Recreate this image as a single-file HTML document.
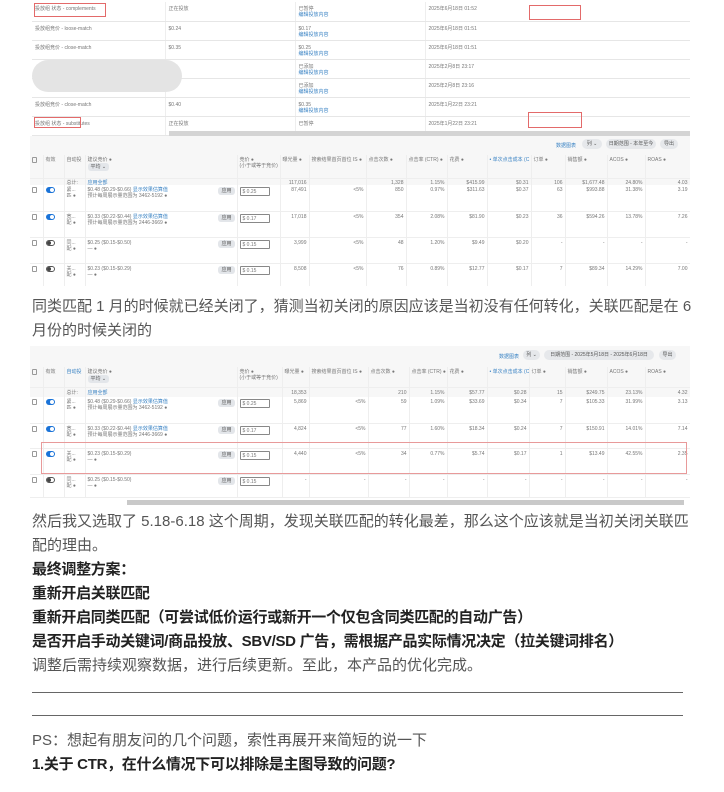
<!DOCTYPE html>
<html><head><meta charset="utf-8"><style>
*{margin:0;padding:0;box-sizing:border-box}
body{width:724px;height:792px;background:#fff;position:relative;overflow:hidden;font-family:"Liberation Sans","Noto Sans CJK SC",sans-serif}
.abs{position:absolute}
table{border-collapse:collapse;table-layout:fixed;font-size:5px;color:#777;line-height:6px}
td{vertical-align:top;padding:2px 2px;overflow:hidden;white-space:nowrap}
.b{color:#3a83c4}
.t1 td{border-bottom:1px solid #e6e6e6;height:19px;border-right:1px solid #eee;padding:4px 3px 0}
.t2 td{border-right:1px solid #eee;border-bottom:1px solid #eee}
.r{text-align:right}
.tog{display:inline-block;width:9px;height:6px;border-radius:3px;background:#1a73d8;position:relative}
.tog::after{content:"";position:absolute;right:1px;top:1px;width:4px;height:4px;border-radius:50%;background:#fff}
.tog.off{background:#fff;border:1px solid #555}
.tog.off::after{left:0;right:auto;top:0;background:#444}
.cb{display:inline-block;width:5px;height:6px;border:1px solid #999;border-radius:1px}
.btn{display:inline-block;background:#e3e6ea;border-radius:3px;padding:1px 3px;color:#555}
.inp{display:inline-block;width:30px;height:9px;border:1px solid #888;border-radius:1px;padding:1px 2px;line-height:6px}
.pill{position:absolute;background:#e6e8eb;border-radius:5px;font-size:5px;color:#555;text-align:center;line-height:10px;height:10px}
.txt{position:absolute;left:32px;font-size:15px;line-height:24px;color:#555;white-space:nowrap}
.bold{color:#222;font-weight:bold;letter-spacing:-0.3px}
.hr{position:absolute;left:32px;width:651px;height:1px;background:#666}
</style></head><body>

<!-- screenshot 1 -->
<div class="abs" style="left:32px;top:0;width:658px;height:136px;background:#fff;overflow:hidden">
<table class="t1" style="width:658px;position:absolute;top:2px;left:0">
<colgroup><col style="width:133px"><col style="width:130px"><col style="width:130px"><col style="width:265px"></colgroup>
<tr><td>投放组 状态 - complements</td><td>正在投放</td><td>已暂停<br><span class="b">编辑投放内容</span></td><td>2025年6月18日 01:52</td></tr>
<tr><td>投放组竞价 - loose-match</td><td>$0.24</td><td>$0.17<br><span class="b">编辑投放内容</span></td><td>2025年6月18日 01:51</td></tr>
<tr><td>投放组竞价 - close-match</td><td>$0.35</td><td>$0.25<br><span class="b">编辑投放内容</span></td><td>2025年6月18日 01:51</td></tr>
<tr><td></td><td>-</td><td>已添加<br><span class="b">编辑投放内容</span></td><td>2025年2月8日 23:17</td></tr>
<tr><td></td><td>-</td><td>已添加<br><span class="b">编辑投放内容</span></td><td>2025年2月8日 23:16</td></tr>
<tr><td>投放组竞价 - close-match</td><td>$0.40</td><td>$0.35<br><span class="b">编辑投放内容</span></td><td>2025年1月22日 23:21</td></tr>
<tr><td>投放组 状态 - substitutes</td><td>正在投放</td><td>已暂停</td><td>2025年1月22日 23:21</td></tr>
</table>
<div class="abs" style="left:0;top:60px;width:150px;height:32px;border-radius:16px;background:#e4e4e4"></div>
<div class="abs" style="left:2px;top:3px;width:72px;height:14px;border:1px solid #e36a6a"></div>
<div class="abs" style="left:2px;top:117px;width:47px;height:11px;border:1px solid #e36a6a"></div>
<div class="abs" style="left:497px;top:5px;width:52px;height:15px;border:1px solid #e36a6a"></div>
<div class="abs" style="left:496px;top:112px;width:54px;height:16px;border:1px solid #e36a6a"></div>
<div class="abs" style="left:137px;top:131px;width:521px;height:5px;background:#d4d4d4"></div>
</div>

<!-- screenshot 2 -->
<div class="abs" style="left:30px;top:136px;width:660px;height:150px;background:#f7f7f7;overflow:hidden">
<span class="abs b" style="left:526px;top:6px;font-size:5px">数据图表</span>
<div class="pill" style="left:552px;top:3px;width:20px">列 ⌄</div>
<div class="pill" style="left:576px;top:3px;width:50px">日期范围 - 本年至今</div>
<div class="pill" style="left:630px;top:3px;width:18px">导出</div>
<table class="t2" style="width:660px;position:absolute;top:19px;left:0">
<colgroup><col style="width:13px"><col style="width:21px"><col style="width:21px"><col style="width:152px"><col style="width:43px"><col style="width:29px"><col style="width:57px"><col style="width:40px"><col style="width:41px"><col style="width:40px"><col style="width:44px"><col style="width:34px"><col style="width:42px"><col style="width:38px"><col style="width:45px"></colgroup>
<tr style="height:23px"><td><span class="cb"></span></td><td>有效</td><td>自动投</td><td>建议竞价 ●<br><span class="btn">平均 ⌄</span></td><td>竞价 ●<br>(小于或等于竞价)</td><td>曝光量 ●</td><td>搜索结果首页首位 IS ●</td><td>点击次数 ●</td><td>点击率 (CTR) ●</td><td>花费 ●</td><td class="b">• 单次点击成本 (C</td><td>订单 ●</td><td>销售额 ●</td><td>ACOS ●</td><td>ROAS ●</td></tr>
<tr style="height:8px"><td style="padding:1px 2px"></td><td style="padding:1px 2px"></td><td style="padding:1px 2px">总计:</td><td class="b" style="padding:1px 2px">应用全部</td><td></td><td class="r" style="padding:1px 2px">117,016</td><td></td><td class="r" style="padding:1px 2px">1,328</td><td class="r" style="padding:1px 2px">1.15%</td><td class="r" style="padding:1px 2px">$415.99</td><td class="r" style="padding:1px 2px">$0.31</td><td class="r" style="padding:1px 2px">106</td><td class="r" style="padding:1px 2px">$1,677.48</td><td class="r" style="padding:1px 2px">24.80%</td><td class="r" style="padding:1px 2px">4.03</td></tr>
</table>
<table class="t2" style="width:660px;position:absolute;top:49px;left:0;background:#fff">
<colgroup><col style="width:13px"><col style="width:21px"><col style="width:21px"><col style="width:152px"><col style="width:43px"><col style="width:29px"><col style="width:57px"><col style="width:40px"><col style="width:41px"><col style="width:40px"><col style="width:44px"><col style="width:34px"><col style="width:42px"><col style="width:38px"><col style="width:45px"></colgroup>
<tr style="height:26px"><td><span class="cb"></span></td><td><span class="tog"></span></td><td>紧...<br>匹 ●</td><td>$0.48 ($0.29-$0.66) <span class="b">显示效果估算值</span> <span class="btn" style="float:right">应用</span><br>预计每周展示量范围为 3462-5192 ●</td><td><span class="inp">$ 0.25</span></td><td class="r">87,491</td><td class="r">&lt;5%</td><td class="r">850</td><td class="r">0.97%</td><td class="r">$311.63</td><td class="r">$0.37</td><td class="r">63</td><td class="r">$993.88</td><td class="r">31.38%</td><td class="r">3.19</td></tr>
<tr style="height:26px"><td><span class="cb"></span></td><td><span class="tog"></span></td><td>宽...<br>配 ●</td><td>$0.33 ($0.22-$0.44) <span class="b">显示效果估算值</span> <span class="btn" style="float:right">应用</span><br>预计每周展示量范围为 2446-3669 ●</td><td><span class="inp">$ 0.17</span></td><td class="r">17,018</td><td class="r">&lt;5%</td><td class="r">354</td><td class="r">2.08%</td><td class="r">$81.90</td><td class="r">$0.23</td><td class="r">36</td><td class="r">$594.26</td><td class="r">13.78%</td><td class="r">7.26</td></tr>
<tr style="height:26px"><td><span class="cb"></span></td><td><span class="tog off"></span></td><td>同...<br>配 ●</td><td>$0.25 ($0.15-$0.50) <span class="btn" style="float:right">应用</span><br>— ●</td><td><span class="inp">$ 0.15</span></td><td class="r">3,999</td><td class="r">&lt;5%</td><td class="r">48</td><td class="r">1.20%</td><td class="r">$9.49</td><td class="r">$0.20</td><td class="r">-</td><td class="r">-</td><td class="r">-</td><td class="r">-</td></tr>
<tr style="height:24px"><td><span class="cb"></span></td><td><span class="tog off"></span></td><td>关...<br>配 ●</td><td>$0.23 ($0.15-$0.29) <span class="btn" style="float:right">应用</span><br>— ●</td><td><span class="inp">$ 0.15</span></td><td class="r">8,508</td><td class="r">&lt;5%</td><td class="r">76</td><td class="r">0.89%</td><td class="r">$12.77</td><td class="r">$0.17</td><td class="r">7</td><td class="r">$89.34</td><td class="r">14.29%</td><td class="r">7.00</td></tr>
</table>
</div>

<div class="txt" style="top:295px">同类匹配 1 月的时候就已经关闭了，猜测当初关闭的原因应该是当初没有任何转化，关联匹配是在 6</div>
<div class="txt" style="top:319px">月份的时候关闭的</div>

<!-- screenshot 3 -->
<div class="abs" style="left:30px;top:346px;width:660px;height:162px;background:#f7f7f7;overflow:hidden">
<span class="abs b" style="left:469px;top:7px;font-size:5px">数据图表</span>
<div class="pill" style="left:493px;top:4px;width:17px">列 ⌄</div>
<div class="pill" style="left:514px;top:4px;width:110px">日期范围 - 2025年5月18日 - 2025年6月18日</div>
<div class="pill" style="left:629px;top:4px;width:17px">导出</div>
<table class="t2" style="width:660px;position:absolute;top:21px;left:0">
<colgroup><col style="width:13px"><col style="width:21px"><col style="width:21px"><col style="width:152px"><col style="width:45px"><col style="width:27px"><col style="width:59px"><col style="width:41px"><col style="width:38px"><col style="width:40px"><col style="width:42px"><col style="width:36px"><col style="width:42px"><col style="width:38px"><col style="width:45px"></colgroup>
<tr style="height:20px"><td><span class="cb"></span></td><td>有效</td><td class="b">自动投</td><td>建议竞价 ●<br><span class="btn">平均 ⌄</span></td><td>竞价 ●<br>(小于或等于竞价)</td><td>曝光量 ●</td><td>搜索结果首页首位 IS ●</td><td>点击次数 ●</td><td>点击率 (CTR) ●</td><td>花费 ●</td><td class="b">• 单次点击成本 (C</td><td>订单 ●</td><td>销售额 ●</td><td>ACOS ●</td><td>ROAS ●</td></tr>
<tr style="height:10px"><td></td><td></td><td>总计:</td><td class="b">应用全部</td><td></td><td class="r">18,353</td><td></td><td class="r">210</td><td class="r">1.15%</td><td class="r">$57.77</td><td class="r">$0.28</td><td class="r">15</td><td class="r">$249.75</td><td class="r">23.13%</td><td class="r">4.32</td></tr>
</table>
<table class="t2" style="width:660px;position:absolute;top:51px;left:0;background:#fff">
<colgroup><col style="width:13px"><col style="width:21px"><col style="width:21px"><col style="width:152px"><col style="width:45px"><col style="width:27px"><col style="width:59px"><col style="width:41px"><col style="width:38px"><col style="width:40px"><col style="width:42px"><col style="width:36px"><col style="width:42px"><col style="width:38px"><col style="width:45px"></colgroup>
<tr style="height:26px"><td><span class="cb"></span></td><td><span class="tog"></span></td><td>紧...<br>匹 ●</td><td>$0.48 ($0.29-$0.66) <span class="b">显示效果估算值</span> <span class="btn" style="float:right">应用</span><br>预计每周展示量范围为 3462-5192 ●</td><td><span class="inp">$ 0.25</span></td><td class="r">5,869</td><td class="r">&lt;5%</td><td class="r">59</td><td class="r">1.09%</td><td class="r">$33.69</td><td class="r">$0.34</td><td class="r">7</td><td class="r">$105.33</td><td class="r">31.99%</td><td class="r">3.13</td></tr>
<tr style="height:25px"><td><span class="cb"></span></td><td><span class="tog"></span></td><td>宽...<br>配 ●</td><td>$0.33 ($0.22-$0.44) <span class="b">显示效果估算值</span> <span class="btn" style="float:right">应用</span><br>预计每周展示量范围为 2446-3669 ●</td><td><span class="inp">$ 0.17</span></td><td class="r">4,824</td><td class="r">&lt;5%</td><td class="r">77</td><td class="r">1.60%</td><td class="r">$18.34</td><td class="r">$0.24</td><td class="r">7</td><td class="r">$150.91</td><td class="r">14.01%</td><td class="r">7.14</td></tr>
<tr style="height:26px"><td><span class="cb"></span></td><td><span class="tog"></span></td><td>关...<br>配 ●</td><td>$0.23 ($0.15-$0.29) <span class="btn" style="float:right">应用</span><br>— ●</td><td><span class="inp">$ 0.15</span></td><td class="r">4,440</td><td class="r">&lt;5%</td><td class="r">34</td><td class="r">0.77%</td><td class="r">$5.74</td><td class="r">$0.17</td><td class="r">1</td><td class="r">$13.49</td><td class="r">42.55%</td><td class="r">2.35</td></tr>
<tr style="height:23px"><td><span class="cb"></span></td><td><span class="tog off"></span></td><td>同...<br>配 ●</td><td>$0.25 ($0.15-$0.50) <span class="btn" style="float:right">应用</span><br>— ●</td><td><span class="inp">$ 0.15</span></td><td class="r">-</td><td class="r">-</td><td class="r">-</td><td class="r">-</td><td class="r">-</td><td class="r">-</td><td class="r">-</td><td class="r">-</td><td class="r">-</td><td class="r">-</td></tr>
</table>
<div class="abs" style="left:0;top:152px;width:660px;height:10px;background:#fff"></div>
<div class="abs" style="left:97px;top:154px;width:557px;height:5px;background:#c9c9c9"></div>
<div class="abs" style="left:11px;top:96px;width:646px;height:32px;border:1px solid #e89a9a"></div>
</div>

<div class="txt" style="top:510px">然后我又选取了 5.18-6.18 这个周期，发现关联匹配的转化最差，那么这个应该就是当初关闭关联匹</div>
<div class="txt" style="top:534px">配的理由。</div>
<div class="txt bold" style="top:558px">最终调整方案：</div>
<div class="txt bold" style="top:582px">重新开启关联匹配</div>
<div class="txt bold" style="top:606px">重新开启同类匹配（可尝试低价运行或新开一个仅包含同类匹配的自动广告）</div>
<div class="txt bold" style="top:630px">是否开启手动关键词/商品投放、SBV/SD 广告，需根据产品实际情况决定（拉关键词排名）</div>
<div class="txt" style="top:654px">调整后需持续观察数据，进行后续更新。至此，本产品的优化完成。</div>
<div class="hr" style="top:692px"></div>
<div class="hr" style="top:715px"></div>
<div class="txt" style="top:729px">PS：想起有朋友问的几个问题，索性再展开来简短的说一下</div>
<div class="txt bold" style="top:753px">1.关于 CTR，在什么情况下可以排除是主图导致的问题?</div>
</body></html>
